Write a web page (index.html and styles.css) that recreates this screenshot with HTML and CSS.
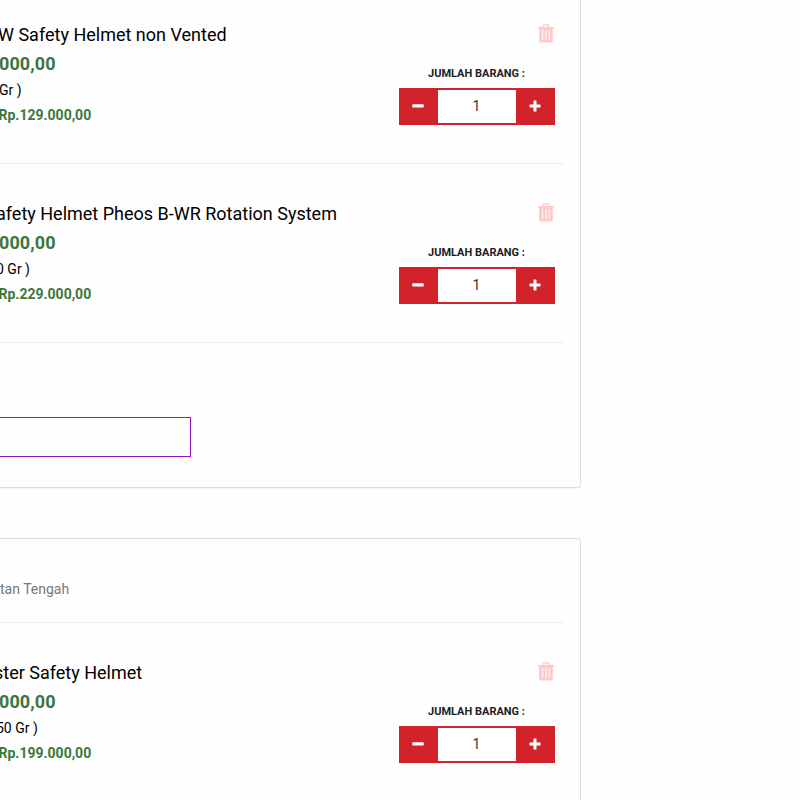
FILE: index.html
```html
<!DOCTYPE html>
<html lang="id">
<head>
<meta charset="utf-8">
<title>Keranjang</title>
<link rel="stylesheet" href="styles.css">
</head>
<body>
<svg class="sprite" aria-hidden="true">
  <symbol id="trash" viewBox="0 0 16 19">
    <path fill-rule="evenodd" d="M4 3 4.8 1.2Q5.2.2 6.3.2H9.7Q10.8.2 11.2 1.2L12 3H16V4.6H14.8V16.6Q14.8 18.6 13 18.6H3Q1.2 18.6 1.2 16.6V4.6H0V3ZM5.6 3H10.4L9.9 1.6H6.1ZM4.2 6V15.8H5.2V6ZM7.4 6V15.8H8.6V6ZM10.8 6V15.8H11.8V6Z"/>
  </symbol>
  <symbol id="minus" viewBox="0 0 12 12"><rect x="0.3" y="4.2" width="11.4" height="3.3" rx=".6"/></symbol>
  <symbol id="plus" viewBox="0 0 12 12"><path d="M5 .5H7Q7.5.5 7.5 1V4.5H11Q11.5 4.5 11.5 5V7Q11.5 7.5 11 7.5H7.5V11Q7.5 11.5 7 11.5H5Q4.5 11.5 4.5 11V7.5H1Q.5 7.5.5 7V5Q.5 4.5 1 4.5H4.5V1Q4.5.5 5 .5Z"/></symbol>
</svg>
<main class="cart">
  <section class="panel panel-first">
    <article class="item">
      <div class="info">
        <h4 class="name name-a">W Safety Helmet non Vented</h4>
        <p class="price">000,00</p>
        <p class="weight weight-a">Gr )</p>
        <p class="subtotal">Rp.129.000,00</p>
      </div>
      <div class="controls">
        <svg class="trash"><use href="#trash"/></svg>
        <span class="label">JUMLAH BARANG :</span>
        <div class="stepper"><button class="step"><svg><use href="#minus"/></svg></button><span class="qty">1</span><button class="step"><svg><use href="#plus"/></svg></button></div>
      </div>
    </article>
    <article class="item">
      <div class="info">
        <h4 class="name name-b">afety Helmet Pheos B-WR Rotation System</h4>
        <p class="price">000,00</p>
        <p class="weight weight-b">0 Gr )</p>
        <p class="subtotal">Rp.229.000,00</p>
      </div>
      <div class="controls">
        <svg class="trash"><use href="#trash"/></svg>
        <span class="label">JUMLAH BARANG :</span>
        <div class="stepper"><button class="step"><svg><use href="#minus"/></svg></button><span class="qty">1</span><button class="step"><svg><use href="#plus"/></svg></button></div>
      </div>
    </article>
    <div class="note"></div>
  </section>
  <section class="panel">
    <header class="origin">tan Tengah</header>
    <article class="item">
      <div class="info">
        <h4 class="name name-c">ster Safety Helmet</h4>
        <p class="price">000,00</p>
        <p class="weight weight-c">50 Gr )</p>
        <p class="subtotal">Rp.199.000,00</p>
      </div>
      <div class="controls">
        <svg class="trash"><use href="#trash"/></svg>
        <span class="label">JUMLAH BARANG :</span>
        <div class="stepper"><button class="step"><svg><use href="#minus"/></svg></button><span class="qty">1</span><button class="step"><svg><use href="#plus"/></svg></button></div>
      </div>
    </article>
  </section>
</main>
</body>
</html>
```
FILE: styles.css
```css
* { box-sizing: border-box; }
html, body { height: 800px; overflow: hidden; }
body {
  margin: 0;
  background: #fefefe;
  color: #000;
  font: 14px/20px Roboto, sans-serif;
}
.sprite { display: none; }
.cart { display: flow-root; width: 590px; height: 800px; padding-right: 9px; overflow: hidden; }
.panel {
  height: 300px;
  background: #fefefe;
  border: 1px solid #ddd;
  border-left: 0;
  border-radius: 0 4px 4px 0;
  box-shadow: 0 1px 1px rgba(0, 0, 0, .05);
  padding-right: 15px;
}
.panel-first {
  height: 503px;
  margin: -15px 0 50px;
  border-top: 0;
  border-radius: 0 0 4px 0;
}
.item {
  display: flex;
  justify-content: space-between;
  height: 179px;
  border-bottom: 1px solid #eee;
}
.info { padding-top: 38px; white-space: nowrap; }
.name, .price, .weight, .subtotal { margin: 0; }
.name { font-size: 18px; line-height: 24px; font-weight: 400; }
.name-a { margin-left: -2px; }
.name-b { margin-left: -4px; }
.name-c { margin-left: -6px; }
.price { margin: 5px 0 0 -1px; color: #3c763d; font-size: 18px; line-height: 24px; font-weight: 700; letter-spacing: .1px; }
.weight { margin-top: 4px; }
.weight-a { margin-left: -1px; }
.weight-b { margin-left: -4px; }
.weight-c { margin-left: -4px; }
.subtotal { margin: 5px 0 0 -1.5px; color: #3c763d; font-weight: 700; }
.controls {
  display: flex;
  flex-direction: column;
  align-items: center;
  width: 156px;
  margin-right: 10px;
  padding-top: 39px;
}
.trash { width: 16px; height: 19px; align-self: flex-end; margin-right: 1px; fill: #ffc9c9; }
.label { margin: 21px 1px 0 0; color: #212121; font-size: 11px; line-height: 20px; font-weight: 700; }
.stepper { display: flex; width: 156px; height: 37px; margin-top: 4px; background: #d2232a; }
.step {
  display: flex;
  align-items: center;
  justify-content: center;
  width: 39px;
  height: 36px;
  padding: 0 1px 0 0;
  border: 0;
  background: none;
}
.step svg { width: 12px; height: 12px; fill: #fff; }
.qty { width: 78px; height: 33px; margin-top: 2px; padding-right: 1px; background: #fff; color: #333; text-align: center; line-height: 32px; }
.note { width: 191px; height: 40px; margin-top: 74px; border: 1px solid #9013c4; border-left: 0; }
.origin { height: 84px; padding-top: 40px; border-bottom: 1px solid #eee; color: #777; }
```
